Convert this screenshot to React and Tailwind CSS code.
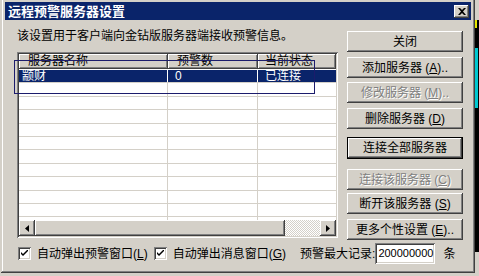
import React from 'react';

const raised = 'shadow-[inset_-1px_-1px_#404040,inset_1px_1px_#ffffff,inset_-2px_-2px_#808080,inset_2px_2px_#d4d0c8]';
const sunken = 'shadow-[inset_1px_1px_#808080,inset_-1px_-1px_#ffffff,inset_2px_2px_#404040,inset_-2px_-2px_#d4d0c8]';
const headerCell = 'shadow-[inset_-1px_-1px_#404040,inset_1px_1px_#ffffff,inset_-2px_-2px_#808080]';
const font = "font-['Liberation_Sans','Noto_Sans_CJK_SC',sans-serif]";

const Btn = ({ children, disabled, isDefault, className = '' }) => {
  if (isDefault) {
    return (
      <div className={`w-[116px] h-[22px] border border-black ${className}`}>
        <div className={`h-full flex items-center justify-center text-[12px] text-black ${raised}`}>{children}</div>
      </div>
    );
  }
  return (
    <div
      className={`w-[116px] h-[21px] flex items-center justify-center text-[12px] ${raised} ${
        disabled ? 'text-[#808080] [text-shadow:1px_1px_0_#ffffff]' : 'text-black'
      } ${className}`}
    >
      {children}
    </div>
  );
};

const Check = () => (
  <div className={`w-[13px] h-[13px] bg-white flex items-center justify-center ${sunken}`}>
    <svg width="7" height="7" viewBox="0 0 7 7">
      <path d="M0 2 L0 4 L2 6 L7 1 L7 -1 L2 4 Z" fill="#000" />
    </svg>
  </div>
);

const rows = [
  { name: '颛财', count: '0', status: '已连接', selected: true },
  ...Array.from({ length: 11 }, () => ({ name: '', count: '', status: '' })),
];

export default function App() {
  return (
    <div className={`w-[479px] h-[276px] bg-[#d4d0c8] flex overflow-hidden ${font}`}>
      <div className={`relative ml-[1px] mt-[-2px] w-[474px] h-[275px] shrink-0 bg-[#d4d0c8] p-[4px] flex flex-col shadow-[inset_-1px_-1px_#404040,inset_1px_1px_#d4d0c8,inset_-2px_-2px_#808080,inset_2px_2px_#ffffff]`}>
        {/* Title bar */}
        <div className="h-[18px] bg-[#0a246a] flex items-center justify-between pl-[3px] pr-[2px]">
          <span className="text-white font-bold text-[13px] leading-[13px] tracking-[0px]">远程预警服务器设置</span>
          <div className={`w-[15px] h-[13px] bg-[#d4d0c8] flex items-center justify-center ${raised}`}>
            <svg width="8" height="7" viewBox="0 0 8 7">
              <path d="M0 0 L2 0 L4 2 L6 0 L8 0 L5 3.5 L8 7 L6 7 L4 5 L2 7 L0 7 L3 3.5 Z" fill="#000" />
            </svg>
          </div>
        </div>

        {/* Body */}
        <div className="flex pl-[12px]">
          <div className="w-[321px] pt-[9px] flex flex-col">
            <div className="h-[14px] text-[12px] leading-[14px] text-black whitespace-nowrap">
              该设置用于客户端向金钻版服务器端接收预警信息。
            </div>
            <div className={`mt-[9px] h-[186px] bg-white p-[2px] flex flex-col ${sunken}`}>
              {/* Header */}
              <div className="h-[15px] flex shrink-0 text-[12px] leading-[15px] text-black bg-[#d4d0c8]">
                <div className={`w-[149px] pl-[9px] ${headerCell}`}>服务器名称</div>
                <div className={`w-[90px] pl-[9px] ${headerCell}`}>预警数</div>
                <div className={`flex-1 pl-[7px] ${headerCell}`}>当前状态</div>
              </div>
              {/* Rows */}
              <div className="flex-1 overflow-hidden mt-[1px]">
                {rows.map((r, i) => (
                  <div
                    key={i}
                    className={`h-[13.4px] flex text-[12px] leading-[13px] border-b border-[#d4d0c8] ${
                      r.selected ? 'bg-[#0a246a] text-white' : 'text-black'
                    }`}
                  >
                    <div className={`w-[149px] pl-[3px] border-r ${r.selected ? 'border-[#ffffff]' : 'border-[#d4d0c8]'}`}>{r.name}</div>
                    <div className={`w-[90px] pl-[7px] border-r ${r.selected ? 'border-[#ffffff]' : 'border-[#d4d0c8]'}`}>{r.count}</div>
                    <div className="flex-1 pl-[7px]">{r.status}</div>
                  </div>
                ))}
              </div>
              {/* Horizontal scrollbar */}
              <div className="h-[16px] flex shrink-0">
                <div className={`w-[16px] h-[16px] bg-[#d4d0c8] flex items-center justify-center ${raised}`}>
                  <svg width="4" height="7" viewBox="0 0 4 7"><path d="M4 0 L0 3.5 L4 7 Z" fill="#000" /></svg>
                </div>
                <div className={`w-[250px] h-[16px] bg-[#d4d0c8] ${raised}`} />
                <div className="flex-1 h-[16px] bg-[repeating-conic-gradient(#d4d0c8_0%_25%,#ffffff_0%_50%)] bg-[length:2px_2px]" />
                <div className={`w-[16px] h-[16px] bg-[#d4d0c8] flex items-center justify-center ${raised}`}>
                  <svg width="4" height="7" viewBox="0 0 4 7"><path d="M0 0 L4 3.5 L0 7 Z" fill="#000" /></svg>
                </div>
              </div>
            </div>
          </div>

          {/* Right buttons */}
          <div className="ml-[9px] pt-[11px] flex flex-col">
            <Btn>关闭</Btn>
            <Btn className="mt-[5px]">添加服务器 (<u>A</u>)..</Btn>
            <Btn disabled className="mt-[4px]">修改服务器 (<u>M</u>)..</Btn>
            <Btn className="mt-[5px]">删除服务器 (<u>D</u>)</Btn>
            <Btn isDefault className="mt-[8px]">连接全部服务器</Btn>
            <Btn disabled className="mt-[10px]">连接该服务器 (<u>C</u>)</Btn>
            <Btn className="mt-[3px]">断开该服务器 (<u>S</u>)</Btn>
            <Btn className="mt-[5px]">更多个性设置 (<u>E</u>)..</Btn>
          </div>
        </div>

        {/* Bottom row */}
        <div className="mt-[3px] h-[21px] flex items-center pl-[13px] text-[12px] text-black whitespace-nowrap">
          <Check />
          <span className="ml-[6px]">自动弹出预警窗口(<u>L</u>)</span>
          <div className="ml-[6px]"><Check /></div>
          <span className="ml-[6px]">自动弹出消息窗口(<u>G</u>)</span>
          <span className="ml-[14px]">预警最大记录:</span>
          <div className={`w-[60px] h-[21px] bg-white flex items-center pl-[3px] text-[11px] ${sunken}`}>200000000</div>
          <span className="ml-[8px]">条</span>
        </div>

        {/* Focus rectangle overlay */}
        <div className="absolute left-[13px] top-[62px] w-[301px] h-[34px] border border-[#1c1c6c] pointer-events-none" />
      </div>
      <div className="flex-1 mt-[20px] h-[232px] bg-black flex flex-col">
        <div className="h-[8px] bg-[#e8e800] w-[2px]" />
        <div className="mt-[20px] h-[60px] bg-[#00c8d0] w-[3px]" />
      </div>
    </div>
  );
}
